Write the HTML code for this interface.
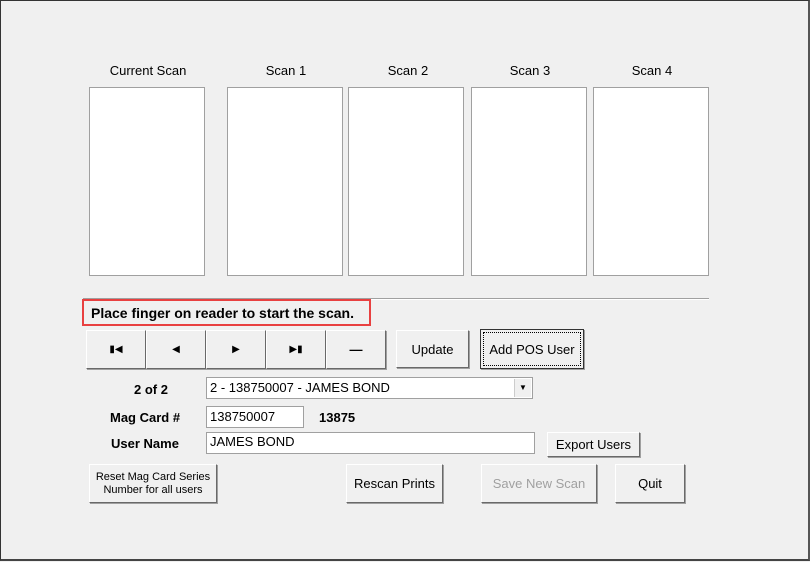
<!DOCTYPE html><html><head><style>
body{margin:0;width:810px;height:562px;background:#f0f0f0;font-family:"Liberation Sans",Arial,sans-serif;font-size:13px;color:#000;overflow:hidden}
#f{position:absolute;left:0;top:0;width:807px;height:558px;border:1px solid #333;border-bottom:2px solid #444;border-right:2px solid #555;background:#f0f0f0}
.a{position:absolute}
.box{position:absolute;top:86px;height:187px;background:#fff;border:1px solid #a0a0a0}
.lbl{position:absolute;top:62px;font-size:13px;text-align:center}
.btn{position:absolute;background:#f0f0f0;border-top:1px solid #fff;border-left:1px solid #fff;border-right:1px solid #696969;border-bottom:1px solid #696969;box-shadow:1px 1px 0 #a0a0a0;display:flex;align-items:center;justify-content:center;font-size:13px;box-sizing:border-box}
.in{position:absolute;background:#fff;border:1px solid #a0a0a0;box-sizing:border-box;font-size:13px;padding-left:3px;line-height:18px}
</style></head><body><div id="f">
<div class="lbl" style="left:89px;width:116px">Current Scan</div>
<div class="lbl" style="left:227px;width:116px">Scan 1</div>
<div class="lbl" style="left:349px;width:116px">Scan 2</div>
<div class="lbl" style="left:471px;width:116px">Scan 3</div>
<div class="lbl" style="left:593px;width:116px">Scan 4</div>
<div class="box" style="left:88px;width:114px"></div>
<div class="box" style="left:226px;width:114px"></div>
<div class="box" style="left:347px;width:114px"></div>
<div class="box" style="left:470px;width:114px"></div>
<div class="box" style="left:592px;width:114px"></div>
<div class="a" style="left:82px;top:297px;width:626px;height:1px;background:#a0a0a0;border-bottom:1px solid #fff"></div>
<div class="a" style="left:81px;top:298px;width:289px;height:27px;border:2px solid #e84040;box-sizing:border-box;background:#f0f0f0"></div>
<div class="a" style="left:90px;top:304px;font-weight:bold;font-size:14px">Place finger on reader to start the scan.</div>
<div class="btn" style="left:85px;top:329px;width:60px;height:39px;font-size:10px">&#9646;&#9664;</div>
<div class="btn" style="left:145px;top:329px;width:60px;height:39px;font-size:10px">&#9664;</div>
<div class="btn" style="left:205px;top:329px;width:60px;height:39px;font-size:10px">&#9654;</div>
<div class="btn" style="left:265px;top:329px;width:60px;height:39px;font-size:10px">&#9654;&#9646;</div>
<div class="btn" style="left:325px;top:329px;width:60px;height:39px;font-weight:bold">&#8212;</div>
<div class="btn" style="left:395px;top:329px;width:73px;height:38px">Update</div>
<div class="btn" style="left:479px;top:328px;width:104px;height:40px;border:1px solid #333;outline:1px dotted #000;outline-offset:-4px">Add POS User</div>
<div class="a" style="left:133px;top:381px;font-weight:bold">2 of 2</div>
<div class="in" style="left:205px;top:376px;width:327px;height:22px;line-height:20px">2 - 138750007 - JAMES BOND<div class="a" style="right:1px;top:1px;width:16px;height:18px;background:#f0f0f0;border-left:1px solid #ccc;font-size:8px;text-align:center;line-height:18px">&#9660;</div></div>
<div class="a" style="left:109px;top:409px;font-weight:bold">Mag Card #</div>
<div class="in" style="left:205px;top:405px;width:98px;height:22px;line-height:20px">138750007</div>
<div class="a" style="left:318px;top:409px;font-weight:bold">13875</div>
<div class="a" style="left:110px;top:435px;font-weight:bold">User Name</div>
<div class="in" style="left:205px;top:431px;width:329px;height:22px;line-height:18px">JAMES BOND</div>
<div class="btn" style="left:546px;top:431px;width:93px;height:25px">Export Users</div>
<div class="btn" style="left:88px;top:463px;width:128px;height:39px;font-size:11px;line-height:13px;text-align:center">Reset Mag Card Series<br>Number for all users</div>
<div class="btn" style="left:345px;top:463px;width:97px;height:39px">Rescan Prints</div>
<div class="btn" style="left:480px;top:463px;width:116px;height:39px;color:#a0a0a0">Save New Scan</div>
<div class="btn" style="left:614px;top:463px;width:70px;height:39px">Quit</div>
</div></body></html>
